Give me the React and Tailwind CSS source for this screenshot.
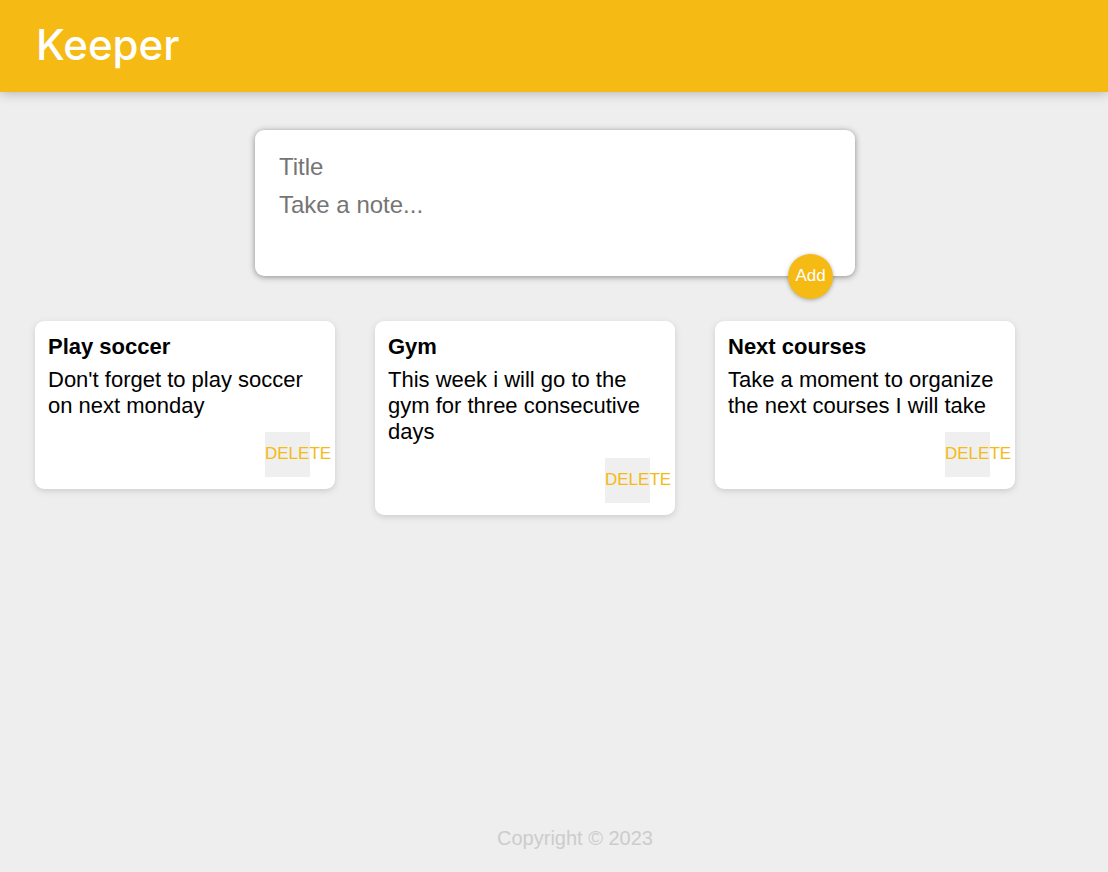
import { useState } from "react";

const initialNotes = [
  { id: 1, title: "Play soccer", content: "Don't forget to play soccer on next monday" },
  { id: 2, title: "Gym", content: "This week i will go to the gym for three consecutive days" },
  { id: 3, title: "Next courses", content: "Take a moment to organize the next courses I will take" },
];

function Header() {
  return (
    <header className="flex h-[92px] items-center bg-[#f5ba13] px-9 pb-0.5 shadow-[0_0_12px_rgba(0,0,0,0.3)]">
      <h1 className="font-['Inter',sans-serif] text-[42px] leading-none font-medium text-white">Keeper</h1>
    </header>
  );
}

function CreateArea({ onAdd }) {
  const [note, setNote] = useState({ title: "", content: "" });

  function change(event) {
    const { name, value } = event.target;
    setNote((prev) => ({ ...prev, [name]: value }));
  }

  function submit(event) {
    event.preventDefault();
    onAdd(note);
    setNote({ title: "", content: "" });
  }

  return (
    <form
      onSubmit={submit}
      className="relative mx-auto flex w-full max-w-[600px] flex-col rounded-[9px] bg-white px-[19px] pt-[18px] pb-6 shadow-[0_1px_6px_rgb(138,138,138)]"
    >
      <input
        name="title"
        aria-label="Title"
        placeholder="Title"
        value={note.title}
        onChange={change}
        className="w-full p-[5px] text-2xl leading-7 outline-none placeholder:text-[#757575]"
      />
      <textarea
        name="content"
        aria-label="Take a note"
        placeholder="Take a note..."
        rows={2}
        value={note.content}
        onChange={change}
        className="w-full resize-none p-[5px] text-2xl leading-7 outline-none placeholder:text-[#757575]"
      />
      <button
        type="submit"
        className="absolute right-[22px] -bottom-[23px] size-[45px] rounded-full bg-[#f5ba13] pb-0.5 text-[17px] leading-5 whitespace-nowrap text-white shadow-[0_1px_4px_rgba(0,0,0,0.3)]"
      >
        Add
      </button>
    </form>
  );
}

function Note({ title, content, onDelete }) {
  return (
    <article className="flex w-[300px] flex-col rounded-[9px] bg-white px-[13px] pt-[13px] pb-3 shadow-[0_2px_6px_rgb(204,204,204)]">
      <h2 className="mb-[7px] text-[22px] leading-[26px] font-bold">{title}</h2>
      <p className="mb-[13px] text-[22px] leading-[26px] break-words">{content}</p>
      <button
        type="button"
        onClick={onDelete}
        className="mr-3 flex size-[45px] items-center justify-start self-end bg-[#efefef] pb-0.5 text-[17px] leading-5 whitespace-nowrap text-[#f5ba13]"
      >
        DELETE
      </button>
    </article>
  );
}

export default function App() {
  const [notes, setNotes] = useState(initialNotes);

  return (
    <div className="flex min-h-screen flex-col bg-[#eeeeee] font-['Liberation_Sans',Arial,sans-serif] text-black">
      <Header />
      <main className="flex-1 pt-[38px] pr-5 pb-10 pl-[22px]">
        <CreateArea onAdd={(note) => setNotes((prev) => [...prev, { ...note, id: Date.now() }])} />
        <section aria-label="Notes" className="mt-[45px] flex flex-wrap items-start gap-10 pl-[13px]">
          {notes.map((note) => (
            <Note
              key={note.id}
              title={note.title}
              content={note.content}
              onDelete={() => setNotes((prev) => prev.filter((item) => item.id !== note.id))}
            />
          ))}
        </section>
      </main>
      <footer className="pb-5 pl-[42px] text-center text-xl leading-7 text-[#cccccc]">
        <p>Copyright © 2023</p>
      </footer>
    </div>
  );
}
